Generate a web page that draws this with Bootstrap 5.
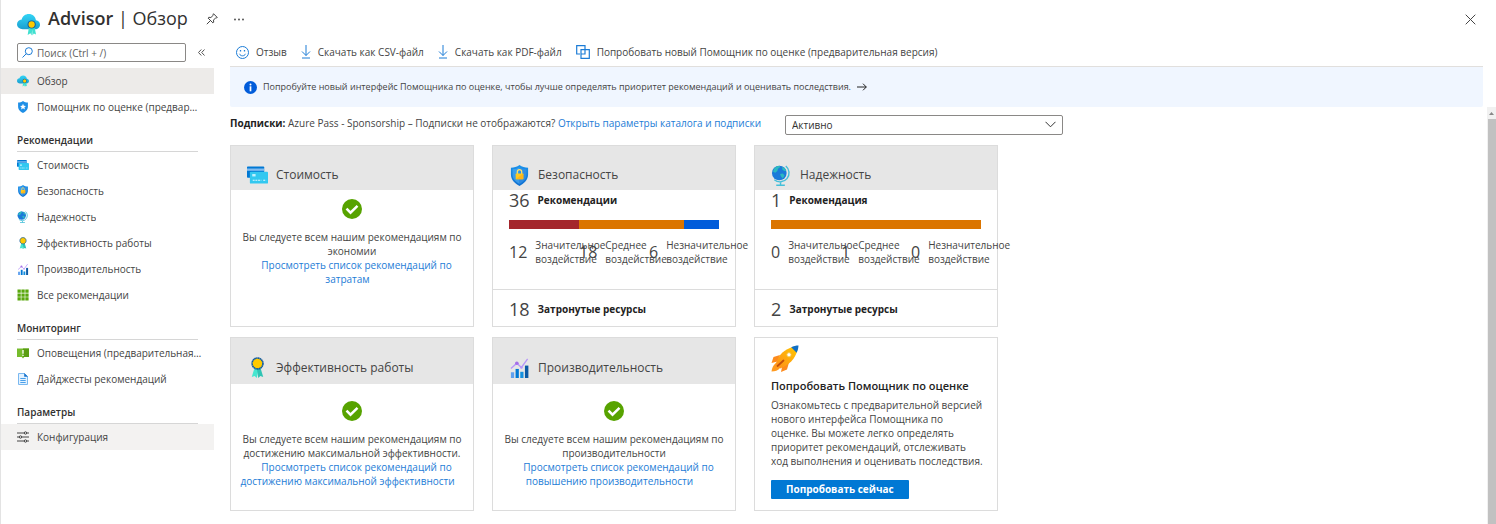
<!DOCTYPE html>
<html lang="ru">
<head>
<meta charset="utf-8">
<meta name="viewport" content="width=device-width, initial-scale=1">
<title>Advisor | Обзор</title>
<link href="https://cdn.jsdelivr.net/npm/bootstrap@5.3.0/dist/css/bootstrap.min.css" rel="stylesheet">
<style>
  body { font-family: "Open Sans", "Noto Sans", sans-serif; font-size: 10px; line-height: 14px; color: #444; background: #fff; }
  a { color: #1c7cd6; text-decoration: none; }
  svg { flex: none; display: block; }
  .portal { min-height: 100vh; border-left: 1px solid #e3e3e3; }
  .title-bar { height: 38px; padding: 0 20px 0 16px; }
  .title-bar h1 { font-size: 18px; line-height: 24px; color: #323130; margin: 6px 18px 0 8px; }
  .title-bar .logo { margin-top: 13px; }
  .plain-btn { background: none; border: 0; padding: 0; color: #444; line-height: 14px; }
  .side { width: 213px; flex: none; }
  .search-row { padding: 5px 8px 6px 16px; gap: 12px; }
  .search-box { width: 169px; height: 19px; border: 1px solid #8a8886; border-radius: 2px; padding: 0 4px; gap: 4px; }
  .search-box input { border: 0; outline: 0; padding: 0; width: 100%; font-size: 10px; line-height: 14px; background: none; }
  .search-box input::placeholder { color: #605e5c; opacity: 1; }
  .side-link { height: 26px; padding: 0 12px 0 16px; gap: 8px; color: #444; }
  .side-link svg { width: 12px; height: 12px; }
  .side-link.current { background: #edebe9; }
  .side-link.hovered { background: #f3f2f1; }
  .side-title { font-size: 10px; line-height: 16px; font-weight: 600; color: #323130; margin: 0 16px; padding: 12px 0 3px; border-bottom: 1px solid #d6d6d6; }
  .main { padding-left: 16px; }
  .commands { height: 29px; gap: 14px; padding: 0 6px; margin-right: 13px; border-bottom: 1px solid #e1dfdd; }
  .commands button { gap: 7px; }
  .notice { min-height: 40px; margin-right: 13px; padding: 0 14px; gap: 6px; background: #f0f6ff; border-radius: 0 0 2px 2px; color: #444; font-size: 9px; }
  .sub-row { padding-top: 8px; gap: 24px; line-height: 16px; }
  .sub-row .form-select { width: 278px; height: 20px; font-size: 10px; line-height: 14px; padding: 2px 24px 2px 6px; border: 1px solid #8a8886; border-radius: 2px; color: #323130; background-image: none; appearance: none; }
  .select-wrap { position: relative; }
  .select-wrap svg { position: absolute; right: 7px; top: 6px; pointer-events: none; }
  .tiles { display: grid; grid-template-columns: repeat(auto-fill, 244px); gap: 10px 18px; max-width: 780px; padding: 10px 0 12px; }
  .tile { border: 1px solid #dcdcdc; background: #fff; }
  .tile-head { height: 44px; padding: 14px 16px 0; gap: 8px; background: #e6e6e6; }
  .tile-head.tall { height: 46px; padding-top: 13px; }
  .tile-head h2 { font-size: 12px; line-height: 18px; font-weight: 400; margin: 0; color: #444; }
  .ok-body { padding: 9px 6px 30px; gap: 11px; text-align: center; }
  .ok-body.tall { padding: 17px 6px 20px; }
  .ok-body a { padding: 0 9px; }
  .big-num { font-size: 18px; line-height: 20px; color: #444; }
  .mid-num { font-size: 16px; line-height: 20px; color: #444; }
  .strong { font-weight: 700; color: #222; }
  .split { height: 9px; margin: 10px 16px 9px; }
  .stats { padding: 0 16px; margin-bottom: 23px; }
  .stats > div { flex: 0 0 70px; width: 70px; gap: 8px; white-space: nowrap; }
  .affected { border-top: 1px solid #dcdcdc; padding: 9px 16px 7px; gap: 8px; }
  .promo { padding: 7px 8px 11px 16px; }
  .promo h2 { font-size: 11px; line-height: 16px; font-weight: 600; color: #222; margin: 5px 0 4px; }
  .promo .btn { background: #0078d4; color: #fff; border: 0; border-radius: 1px; font-size: 10px; line-height: 14px; font-weight: 700; padding: 2px 15px 3px; margin-top: 12px; }
  .rail { width: 9px; flex: none; background: #f1f1f1; }
  .rail svg { margin: 4px auto; }
  .rail span { background: #c1c1c1; margin: 0 0 0 1px; }
</style>
</head>
<body>
<svg width="0" height="0" class="position-absolute" aria-hidden="true">
  <defs>
    <linearGradient id="gc" x1="0" y1="0" x2="0" y2="1"><stop offset="0" stop-color="#32d4f5"/><stop offset="1" stop-color="#1b9fd0"/></linearGradient>
    <linearGradient id="gs" x1="0" y1="0" x2="0" y2="1"><stop offset="0" stop-color="#1b93eb"/><stop offset="1" stop-color="#0f6fd0"/></linearGradient>
    <linearGradient id="gr" x1="1" y1="0" x2="0" y2="1"><stop offset="0" stop-color="#ffca00"/><stop offset="1" stop-color="#ff8c1a"/></linearGradient>
  </defs>
  <symbol id="i-advisor" viewBox="0 0 22 22">
    <path d="M5.500 15.500C2.400 15.500 0 13.500 0 10.800 0 8.200 2 6.300 4.500 6.100 5.200 3 8 1 11.200 1c3.800 0 6.500 2.600 6.900 6C20.500 7.400 22 9 22 11.200c0 2.500-2 4.300-4.600 4.300z" fill="url(#gc)"/>
    <path d="M11.500 13l-1.300 8 2.600-1.700L14 21.500l.6-7zM14.400 14l.4 7.500 1.300-2 2.100 1L16.700 13z" fill="#3fe0d0"/>
    <circle cx="14" cy="11" r="3.900" fill="#0c59a4"/><circle cx="14" cy="11" r="3" fill="#ffca00"/>
  </symbol>
  <symbol id="i-shield" viewBox="0 0 20 22">
    <path d="M10 0c2.500 2.200 6 2.800 9 2.800V10c0 6-4.500 9.500-9 12-4.500-2.500-9-6-9-12V2.800C4 2.800 7.500 2.200 10 0z" fill="url(#gs)"/>
    <path d="M10 2v18c-3.700-2.200-7.300-5.200-7.300-10V4.400C5.400 4.200 8 3.600 10 2z" fill="#4aa8f0" opacity=".7"/>
    <path d="M10 2v18c3.700-2.200 7.300-5.200 7.300-10V4.400C14.600 4.200 12 3.600 10 2z" fill="#3b92e6" opacity=".7"/>
    <path d="M7.700 9.500V7.200a2.300 2.300 0 0 1 4.600 0v2.300" fill="none" stroke="#ffe26a" stroke-width="1.300"/>
    <rect x="6" y="9" width="8" height="6" rx=".7" fill="#ffc91f"/><path d="M6 15l8-6v5.300l-.7.7z" fill="#fbb51c"/>
  </symbol>
  <symbol id="i-star" viewBox="0 0 20 22">
    <path d="M10 0c2.500 2.200 6 2.800 9 2.800V10c0 6-4.500 9.500-9 12-4.500-2.500-9-6-9-12V2.800C4 2.800 7.500 2.200 10 0z" fill="#1f8fe6"/>
    <path d="M10 5l1.600 3.600 3.900.4-2.900 2.600.8 3.900L10 13.500l-3.400 2 .8-3.900L4.500 9l3.900-.4z" fill="#fff"/>
  </symbol>
  <symbol id="i-cost" viewBox="0 0 22 18">
    <rect x="0" y="0" width="18" height="12" rx=".8" fill="#0078d4"/><rect x="0" y="2.200" width="18" height="2.400" fill="#83bdf0"/>
    <rect x="3" y="5.500" width="19" height="12.500" rx=".9" fill="#32c8f0"/><rect x="5.500" y="8" width="3.500" height="2.500" fill="#c3f1ff"/>
    <path d="M6 14.500h9M17 14.500h3" stroke="#e4f9ff" stroke-width="1.200" stroke-dasharray="2 .8"/>
  </symbol>
  <symbol id="i-globe" viewBox="0 0 22 22">
    <path d="M15.500 1a9.300 9.300 0 0 1-12 14.500" fill="none" stroke="#45bfd9" stroke-width="1.500"/>
    <path d="M10 18v3.200M5.500 21.200h9" stroke="#45bfd9" stroke-width="1.500"/>
    <circle cx="8.700" cy="8.400" r="7.700" fill="#1b7ad9"/>
    <path d="M3 4.200C4.500 2 7 .800 9 .800l.7 1.400-2.300 1.700-.8 2.400L4.500 8 2.200 7zM11.500 2l3 1.200 1.500 3-2 .2-2-1.400zM9.500 9.500l3-.6 1.700 2-1.800 3.200L10.500 12z" fill="#2cb9c0"/>
  </symbol>
  <symbol id="i-medal" viewBox="0 0 22 22">
    <path d="M8 11L5 21l3-1 2.200 2 1.800-9z" fill="#45e6d0"/><path d="M14 11l3 10-3-1-2.200 2L10.500 13z" fill="#2fc4b4"/>
    <circle cx="11" cy="6.800" r="5.700" fill="#ffca00" stroke="#0c59a4" stroke-width="1.700" stroke-dasharray="1.600 .3"/>
  </symbol>
  <symbol id="i-perf" viewBox="0 0 20 22">
    <rect x="1" y="16" width="3.400" height="6" fill="#5ea0ef"/><rect x="5.900" y="12.500" width="3.400" height="9.500" fill="#0078d4"/>
    <rect x="10.800" y="15.500" width="3.400" height="6.500" fill="#1490df"/><rect x="15.700" y="9" width="3.600" height="13" fill="#0c59a4"/>
    <path d="M1 12l6.200-5.500L12 11l6.500-9" fill="none" stroke="#b796f9" stroke-width="1.400"/>
    <circle cx="7.200" cy="6.500" r="1.900" fill="#a56ee8"/><circle cx="12" cy="11" r="1.400" fill="#b796f9"/>
  </symbol>
  <symbol id="i-grid" viewBox="0 0 12 12">
    <path d="M.5.500h3.300v3.300H.5zM4.400.500h3.300v3.300H4.400zM8.300.500h3.300v3.300H8.300zM.5 4.400h3.300v3.300H.5zM4.400 4.400h3.300v3.300H4.400zM8.300 4.400h3.300v3.300H8.300zM.5 8.300h3.300v3.300H.5zM4.400 8.300h3.300v3.300H4.400zM8.300 8.300h3.300v3.300H8.300z" fill="#5aa80e"/>
  </symbol>
  <symbol id="i-alert" viewBox="0 0 12 12">
    <path d="M0 1.500h12V10H7.300L6 11.500 4.700 10H0z" fill="#76bc2d"/><path d="M6 1.500h6V10H6z" fill="#5a9e13"/><path d="M6 3v3.800M6 7.700v1.200" stroke="#fff" stroke-width="1.300"/>
  </symbol>
  <symbol id="i-doc" viewBox="0 0 12 12">
    <path d="M1.500.5h6l3 3v8h-9z" fill="#e3f2ff" stroke="#7ab8f0"/><path d="M7.200 0L11 3.800H7.200z" fill="#1672cc"/>
    <path d="M3.300 5.500h5.400M3.300 7.500h5.400M3.300 9.500h5.400" stroke="#4aa0ea"/>
  </symbol>
  <symbol id="i-config" viewBox="0 0 12 12">
    <path d="M0 2h12M0 6h12M0 10h12" stroke="#444"/><g fill="#f3f2f1" stroke="#444"><circle cx="8.500" cy="2" r="1.200"/><circle cx="3.500" cy="6" r="1.200"/><circle cx="8.500" cy="10" r="1.200"/></g>
  </symbol>
  <symbol id="i-ok" viewBox="0 0 20 20">
    <circle cx="10" cy="10" r="10" fill="#57a300"/><path d="M4.500 9.700l4 4L15.500 6.800" fill="none" stroke="#fff" stroke-width="2.500"/>
  </symbol>
  <symbol id="i-down" viewBox="0 0 10 14">
    <path d="M5 0v10.500M1 6.500l4 4 4-4M1 13h8" fill="none" stroke="#1c7cd6"/>
  </symbol>
</svg>

<div class="portal d-flex flex-column">
  <header class="title-bar d-flex">
    <svg class="logo" width="23" height="23"><use href="#i-advisor"/></svg>
    <h1 class="fw-normal text-nowrap"><span class="fw-semibold">Advisor</span> | Обзор</h1>
    <button class="plain-btn align-self-center" aria-label="Закрепить"><svg width="12" height="12" viewBox="0 0 12 12" fill="none" stroke="#444"><path d="M7.500.7l3.800 3.800-1 .4-.6-.1-2.200 2.300.2 2.100-.8.7-4.800-4.800.7-.8 2.100.2L7.200 2.300l-.1-.6zM4 8L.8 11.200"/></svg></button>
    <button class="plain-btn align-self-center ms-3" aria-label="Ещё"><svg width="10" height="3" fill="#444"><circle cx="1" cy="1.500" r=".9"/><circle cx="5" cy="1.500" r=".9"/><circle cx="9" cy="1.500" r=".9"/></svg></button>
    <button class="plain-btn align-self-center ms-auto" aria-label="Закрыть"><svg width="11" height="11" viewBox="0 0 11 11" stroke="#444"><path d="M.7.700l9.600 9.600M10.300.7L.7 10.300"/></svg></button>
  </header>

  <div class="d-flex flex-grow-1">
    <nav class="side">
      <div class="search-row d-flex align-items-center">
        <label class="search-box d-flex align-items-center">
          <svg width="11" height="11" viewBox="0 0 11 11" fill="none" stroke="#1c7cd6"><circle cx="6.800" cy="4.200" r="3.500"/><path d="M4.300 6.700L.5 10.500"/></svg>
          <input type="text" placeholder="Поиск (Ctrl + /)" aria-label="Поиск">
        </label>
        <button class="plain-btn" aria-label="Свернуть"><svg width="7" height="7" viewBox="0 0 7 7" fill="none" stroke="#555"><path d="M3.300.5l-2.800 3 2.800 3M6.500.5l-2.800 3 2.800 3"/></svg></button>
      </div>
      <a href="#" class="side-link current d-flex align-items-center"><svg><use href="#i-advisor"/></svg><span class="text-truncate">Обзор</span></a>
      <a href="#" class="side-link d-flex align-items-center"><svg><use href="#i-star"/></svg><span class="text-truncate">Помощник по оценке (предварительная версия)</span></a>
      <h2 class="side-title">Рекомендации</h2>
      <a href="#" class="side-link d-flex align-items-center"><svg><use href="#i-cost"/></svg><span class="text-truncate">Стоимость</span></a>
      <a href="#" class="side-link d-flex align-items-center"><svg><use href="#i-shield"/></svg><span class="text-truncate">Безопасность</span></a>
      <a href="#" class="side-link d-flex align-items-center"><svg><use href="#i-globe"/></svg><span class="text-truncate">Надежность</span></a>
      <a href="#" class="side-link d-flex align-items-center"><svg><use href="#i-medal"/></svg><span class="text-truncate">Эффективность работы</span></a>
      <a href="#" class="side-link d-flex align-items-center"><svg><use href="#i-perf"/></svg><span class="text-truncate">Производительность</span></a>
      <a href="#" class="side-link d-flex align-items-center"><svg><use href="#i-grid"/></svg><span class="text-truncate">Все рекомендации</span></a>
      <h2 class="side-title">Мониторинг</h2>
      <a href="#" class="side-link d-flex align-items-center"><svg><use href="#i-alert"/></svg><span class="text-truncate">Оповещения (предварительная версия)</span></a>
      <a href="#" class="side-link d-flex align-items-center"><svg><use href="#i-doc"/></svg><span class="text-truncate">Дайджесты рекомендаций</span></a>
      <h2 class="side-title">Параметры</h2>
      <a href="#" class="side-link hovered d-flex align-items-center"><svg><use href="#i-config"/></svg><span class="text-truncate">Конфигурация</span></a>
    </nav>

    <main class="main d-flex flex-column flex-grow-1">
      <div class="commands d-flex align-items-center">
        <button class="plain-btn d-flex align-items-center"><svg width="13" height="13" viewBox="0 0 13 13" fill="none" stroke="#1c7cd6"><circle cx="6.500" cy="6.500" r="6"/><path d="M3.500 7.800c1 2.700 5 2.700 6 0"/><path d="M4.500 4v1.500M8.500 4v1.500" stroke-width="1.300"/></svg>Отзыв</button>
        <button class="plain-btn d-flex align-items-center"><svg width="10" height="14"><use href="#i-down"/></svg>Скачать как CSV-файл</button>
        <button class="plain-btn d-flex align-items-center"><svg width="10" height="14"><use href="#i-down"/></svg>Скачать как PDF-файл</button>
        <button class="plain-btn d-flex align-items-center"><svg width="14" height="14" viewBox="0 0 14 14" fill="none" stroke="#1c7cd6" stroke-width="1.200"><path d="M4 9H.7V.7H9V4M5 4.700h8.300v8.600H5zM5 9h4V5"/></svg>Попробовать новый Помощник по оценке (предварительная версия)</button>
      </div>
      <a href="#" class="notice d-flex align-items-center">
        <svg width="13" height="13" viewBox="0 0 13 13"><circle cx="6.500" cy="6.500" r="6.500" fill="#015cda"/><path d="M6.500 5.300v5" stroke="#fff" stroke-width="1.700"/><circle cx="6.500" cy="3.400" r="1" fill="#fff"/></svg>
        <span>Попробуйте новый интерфейс Помощника по оценке, чтобы лучше определять приоритет рекомендаций и оценивать последствия.</span>
        <svg width="10" height="8" viewBox="0 0 10 8" fill="none" stroke="#222"><path d="M0 4h9.300M6 .700L9.300 4 6 7.300"/></svg>
      </a>

      <div class="d-flex flex-grow-1">
        <div class="flex-grow-1">
          <div class="sub-row d-flex">
            <div><b class="strong">Подписки:</b> Azure Pass - Sponsorship – Подписки не отображаются? <a href="#">Открыть параметры каталога и подписки</a></div>
            <div class="select-wrap">
              <select class="form-select" aria-label="Состояние"><option>Активно</option></select>
              <svg width="11" height="7" viewBox="0 0 11 7" fill="none" stroke="#333"><path d="M.5.800l5 5 5-5"/></svg>
            </div>
          </div>

          <div class="tiles">
            <section class="tile">
              <div class="tile-head d-flex align-items-center"><svg width="21" height="18"><use href="#i-cost"/></svg><h2>Стоимость</h2></div>
              <div class="ok-body d-flex flex-column align-items-center">
                <svg width="20" height="20"><use href="#i-ok"/></svg>
                <div>Вы следуете всем нашим рекомендациям по экономии<br><a href="#">Просмотреть список рекомендаций по затратам</a></div>
              </div>
            </section>
            <section class="tile">
              <div class="tile-head d-flex align-items-center"><svg width="21" height="21"><use href="#i-shield"/></svg><h2>Безопасность</h2></div>
              <div class="d-flex align-items-center px-3 gap-2"><span class="big-num">36</span><span class="strong">Рекомендации</span></div>
              <div class="split d-flex"><div style="width:33.330%;background:#a4262c"></div><div style="width:50%;background:#db7500"></div><div style="width:16.670%;background:#015cda"></div></div>
              <div class="stats d-flex">
                <div class="d-flex align-items-center"><span class="mid-num">12</span><span>Значительное<br>воздействие</span></div>
                <div class="d-flex align-items-center"><span class="mid-num">18</span><span>Среднее<br>воздействие</span></div>
                <div class="d-flex align-items-center"><span class="mid-num">6</span><span>Незначительное<br>воздействие</span></div>
              </div>
              <div class="affected d-flex align-items-center"><span class="big-num">18</span><span class="strong">Затронутые ресурсы</span></div>
            </section>
            <section class="tile">
              <div class="tile-head d-flex align-items-center"><svg width="21" height="21"><use href="#i-globe"/></svg><h2>Надежность</h2></div>
              <div class="d-flex align-items-center px-3 gap-2"><span class="big-num">1</span><span class="strong">Рекомендация</span></div>
              <div class="split d-flex"><div style="width:100%;background:#db7500"></div></div>
              <div class="stats d-flex">
                <div class="d-flex align-items-center"><span class="mid-num">0</span><span>Значительное<br>воздействие</span></div>
                <div class="d-flex align-items-center"><span class="mid-num">1</span><span>Среднее<br>воздействие</span></div>
                <div class="d-flex align-items-center"><span class="mid-num">0</span><span>Незначительное<br>воздействие</span></div>
              </div>
              <div class="affected d-flex align-items-center"><span class="big-num">2</span><span class="strong">Затронутые ресурсы</span></div>
            </section>
            <section class="tile">
              <div class="tile-head tall d-flex align-items-center"><svg width="21" height="21"><use href="#i-medal"/></svg><h2>Эффективность работы</h2></div>
              <div class="ok-body tall d-flex flex-column align-items-center">
                <svg width="20" height="20"><use href="#i-ok"/></svg>
                <div>Вы следуете всем нашим рекомендациям по достижению максимальной эффективности.<br><a href="#">Просмотреть список рекомендаций по достижению максимальной эффективности</a></div>
              </div>
            </section>
            <section class="tile">
              <div class="tile-head tall d-flex align-items-center"><svg width="21" height="21"><use href="#i-perf"/></svg><h2>Производительность</h2></div>
              <div class="ok-body tall d-flex flex-column align-items-center">
                <svg width="20" height="20"><use href="#i-ok"/></svg>
                <div>Вы следуете всем нашим рекомендациям по производительности<br><a href="#">Просмотреть список рекомендаций по повышению производительности</a></div>
              </div>
            </section>
            <section class="tile promo">
              <svg width="28" height="28" viewBox="0 0 28 28">
                <path d="M9 10L2.500 12 0.500 18l6-1.500zM11 22l-1 5 6-2.500 2-7z" fill="#fd8b1e"/>
                <path d="M5 18c-3 2-4 5-4.500 8.500C4 26.500 7 25.500 9.500 22.500z" fill="#ff9a1f"/>
                <path d="M27 1C20 1.500 12 5 7.500 12.500L4.500 19l4.800 4.500 6.200-3.300C23 15.500 26.500 8 27 1z" fill="url(#gr)"/>
                <path d="M27.500.5c-2.500 0-5 .6-7.300 1.700l5.400 5.500c1.200-2.300 1.800-4.700 1.900-7.200z" fill="#0f6fc5"/>
                <circle cx="18" cy="9.800" r="2.200" fill="#fff" stroke="#f5c23a"/><path d="M6.500 21l6-5.500" stroke="#c4500c" stroke-width="1.800" stroke-linecap="round"/>
              </svg>
              <h2>Попробовать Помощник по оценке</h2>
              <div>Ознакомьтесь с предварительной версией нового интерфейса Помощника по<br>оценке. Вы можете легко определять приоритет рекомендаций, отслеживать<br>ход выполнения и оценивать последствия.</div>
              <button class="btn">Попробовать сейчас</button>
            </section>
          </div>
        </div>
        <div class="rail d-flex flex-column" aria-hidden="true"><svg width="5" height="4"><path d="M0 4l2.500-3L5 4z" fill="#888"/></svg><span class="flex-grow-1"></span></div>
      </div>
    </main>
  </div>
</div>
<script src="https://cdn.jsdelivr.net/npm/bootstrap@5.3.0/dist/js/bootstrap.bundle.min.js"></script>
</body>
</html>
